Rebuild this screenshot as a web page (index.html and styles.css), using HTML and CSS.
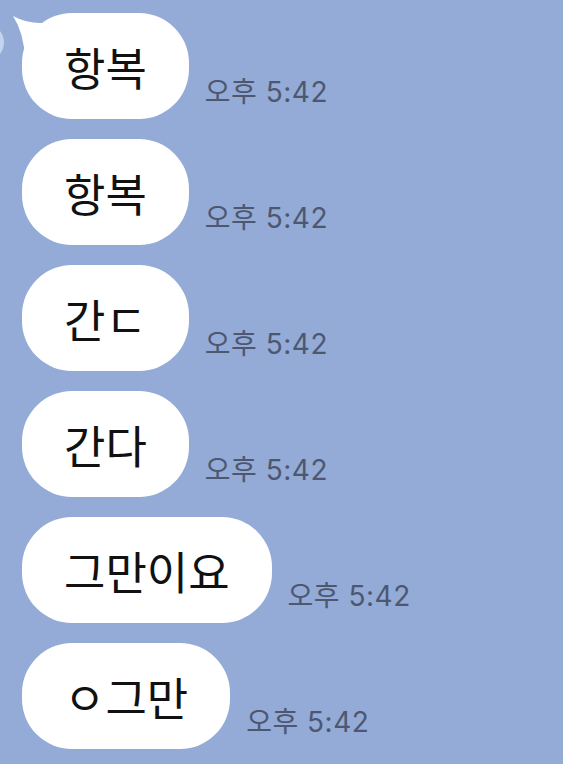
FILE: index.html
```html
<!DOCTYPE html>
<html lang="ko">
<head>
    <meta charset="UTF-8">
    <meta name="viewport" content="width=device-width, initial-scale=1.0">
    <title>채팅</title>
    <link rel="stylesheet" href="styles.css">
</head>
<body>

    <!-- Chat -->
    <div class="chat">
        <div class="avatar"></div>

        <div class="msg">
            <div class="bubble first">
                <svg class="tail" width="40" height="44" viewBox="0 0 40 44">
                    <path d="M1 1 Q 14 8 28 8 L 40 8 L 40 44 L 13 44 Q 12 18 1 1 Z" fill="#fff"/>
                </svg>
                항복
            </div>
            <span class="time">오후 5:42</span>
        </div>

        <div class="msg">
            <div class="bubble">항복</div>
            <span class="time">오후 5:42</span>
        </div>

        <div class="msg">
            <div class="bubble">간ㄷ</div>
            <span class="time">오후 5:42</span>
        </div>

        <div class="msg">
            <div class="bubble">간다</div>
            <span class="time">오후 5:42</span>
        </div>

        <div class="msg">
            <div class="bubble">그만이요</div>
            <span class="time">오후 5:42</span>
        </div>

        <div class="msg">
            <div class="bubble">ㅇ그만</div>
            <span class="time">오후 5:42</span>
        </div>
    </div>

</body>
</html>
```

FILE: styles.css
```css
/* Global Styles */
* {
    margin: 0;
    padding: 0;
    box-sizing: border-box;
}

body {
    background-color: #93abd6;
    font-family: "Noto Sans CJK KR", "Noto Sans", sans-serif;
    overflow: hidden;
}

/* Chat list */
.chat {
    position: relative;
    display: flex;
    flex-direction: column;
    gap: 20px;
    padding: 13px 0 0 22px;
}

.avatar {
    position: absolute;
    left: -33px;
    top: 24px;
    width: 37px;
    height: 37px;
    border-radius: 50%;
    background: #c3d4f0;
}

.msg {
    display: flex;
    align-items: flex-end;
    gap: 16px;
}

/* Bubbles */
.bubble {
    position: relative;
    height: 106px;
    padding: 0 42px;
    border-radius: 50px;
    background: #fff;
    color: #111;
    font-size: 45px;
    display: flex;
    align-items: center;
    white-space: nowrap;
}

.tail {
    position: absolute;
    left: -10px;
    top: 2px;
}

/* Timestamp */
.time {
    font-family: Inter, "Noto Sans CJK KR", sans-serif;
    font-size: 28px;
    letter-spacing: 0.5px;
    line-height: 1;
    color: #4d5870;
    margin-bottom: 13px;
    white-space: nowrap;
}
```
